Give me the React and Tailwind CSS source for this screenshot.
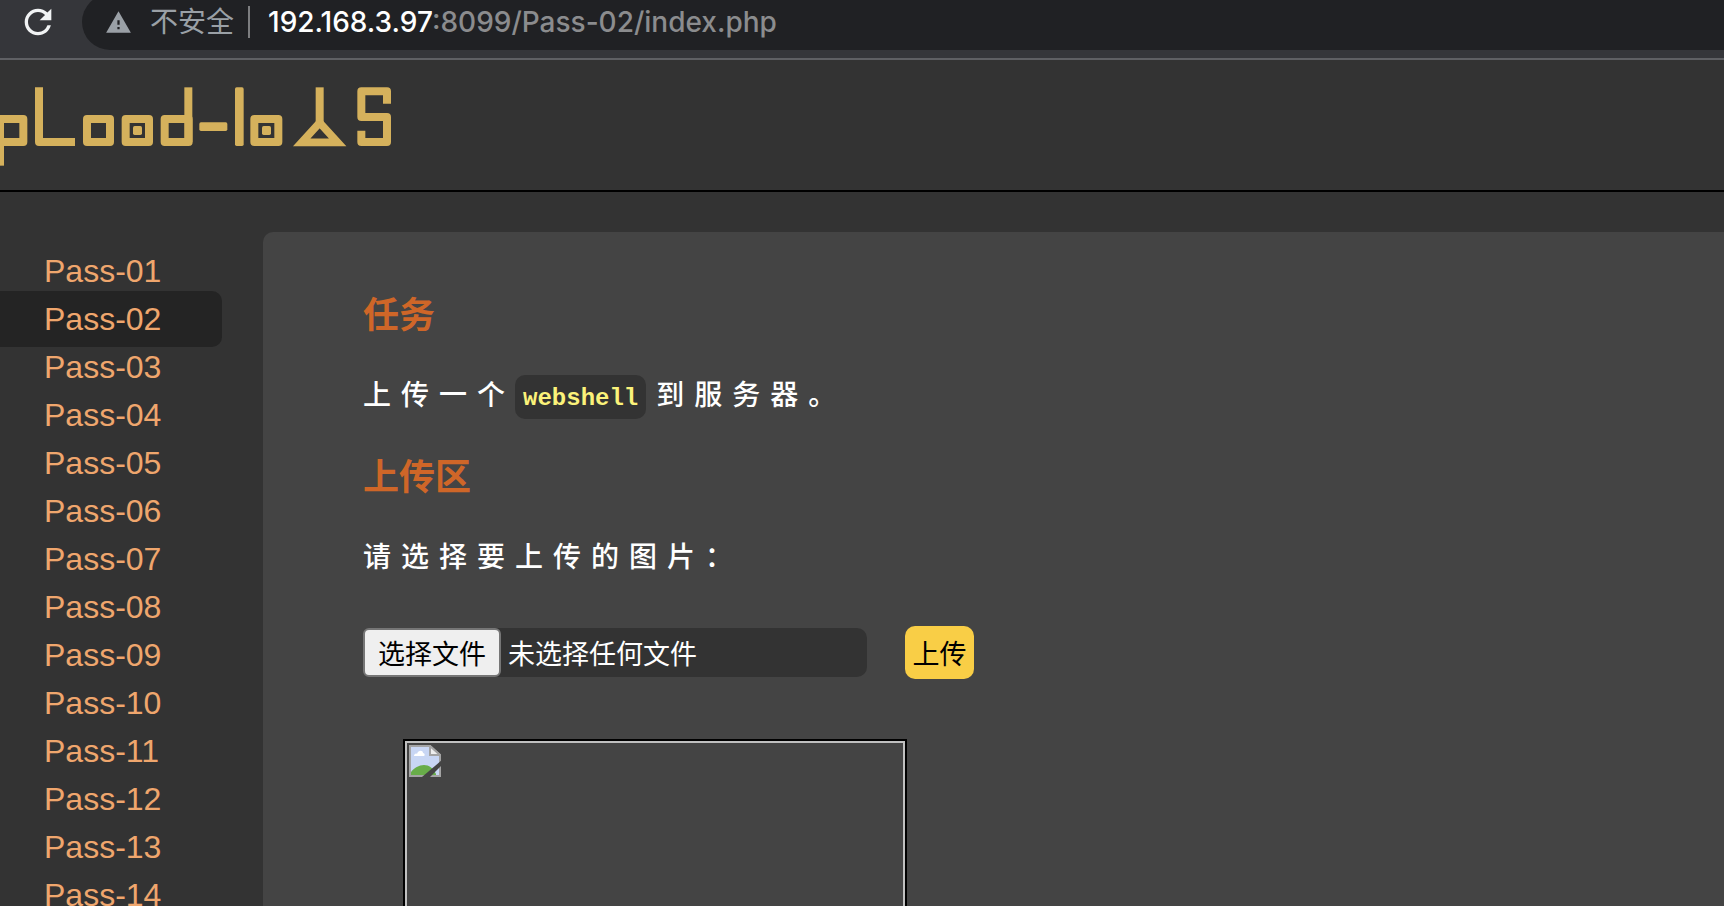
import React from "react";
import { MdRefresh, MdWarning } from "react-icons/md";

const passes = [
    "Pass-01", "Pass-02", "Pass-03", "Pass-04", "Pass-05", "Pass-06", "Pass-07",
    "Pass-08", "Pass-09", "Pass-10", "Pass-11", "Pass-12", "Pass-13", "Pass-14",
];

function AddressBar() {
    return (
        <div className="flex shrink-0 h-[60px] overflow-hidden bg-[#35363a] border-b-2 border-[#5f6064]">
            <button aria-label="重新加载" className="flex items-start pt-[2px] pl-[18px] w-[82px] shrink-0 text-[#f1f3f4]">
                <MdRefresh size={40} />
            </button>
            <div className="flex flex-1 items-center -mt-[6px] h-14 pl-[23px] rounded-l-full bg-[#202124] text-[28px] leading-8 whitespace-nowrap font-['Inter','Noto_Sans_CJK_SC',sans-serif]">
                <MdWarning size={27} className="text-[#9aa0a6]" />
                <span className="ml-[18px] text-[#9aa0a6]">不安全</span>
                <span className="ml-[14px] mr-[18px] w-[2px] h-8 bg-[#7d7e80]" />
                <span className="font-medium text-[#8b8c8e]">
                    <span className="text-white">192.168.3.97</span>:8099/Pass-02/index.php
                </span>
            </div>
        </div>
    );
}

function Logo() {
    return (
        <svg viewBox="0 0 1260 360" width="420" height="120" fill="none" stroke="#d5b15c" strokeWidth="24" strokeLinejoin="round" role="img" aria-label="upload-labs">
            <rect x="0" y="147" width="70" height="69" />
            <line x1="0" y1="147" x2="0" y2="287" />
            <polyline points="117,52 117,216 225,216" />
            <rect x="261" y="147" width="69" height="69" />
            <rect x="377" y="147" width="70" height="69" />
            <rect x="399" y="168" width="27" height="27" rx="5" fill="#d5b15c" stroke="none" />
            <rect x="494" y="147" width="72" height="69" />
            <line x1="565" y1="52" x2="565" y2="216" />
            <rect x="598" y="157" width="84" height="26" rx="5" fill="#d5b15c" stroke="none" />
            <rect x="705" y="52" width="26" height="176" rx="5" fill="#d5b15c" stroke="none" />
            <rect x="763" y="147" width="72" height="69" />
            <rect x="786" y="168" width="27" height="27" rx="5" fill="#d5b15c" stroke="none" />
            {/* triangle on a pole */}
            <line x1="959" y1="52" x2="959" y2="160" />
            <polygon points="905,217 1013,217 959,158" strokeWidth="23" strokeLinejoin="miter" />
            <polyline points="1161,101 1161,64 1084,64 1084,141 1161,141 1161,216 1084,216 1084,182" />
        </svg>
    );
}

function BrokenImage() {
    return (
        <svg viewBox="0 0 32 32" width="32" height="32" aria-hidden="true">
            <path d="M1 1h20l10 9v21H1z" fill="#c8d6f4" stroke="#a3a3a3" strokeWidth="2" />
            <path d="M5 11c0-2 2-3 3-2 1-4 6-4 6-1 2 0 2 3 1 3z" fill="#fff" />
            <path d="M2 30v-3c3-4 8-7 13-7 5 0 9 3 12 9v1z" fill="#68ad49" />
            <path d="M21 1v9h10z" fill="#eee" stroke="#a3a3a3" strokeWidth="2" />
            <path d="M33 15v5L21 32h-8z" fill="#444" />
        </svg>
    );
}

function App() {
    return (
        <div className="flex flex-col h-screen overflow-hidden bg-[#333] font-['Liberation_Sans','Noto_Sans_CJK_SC',sans-serif]">
            <AddressBar />

            {/* Header */}
            <header className="shrink-0 pt-[10px] border-b-2 border-black">
                <Logo />
            </header>

            <div className="flex flex-1 min-h-0">
                {/* Pass list */}
                <nav className="w-[263px] shrink-0 pt-[55px]">
                    <ul>
                        {passes.map((pass) => (
                            <li key={pass} className="text-[32px] leading-[48px]">
                                <a
                                    href={`#${pass}`}
                                    className={pass === "Pass-02" ? "py-[10px] pl-11 pr-[61px] rounded-r-[10px] bg-[#242424] text-[#efa66d]" : "pl-11 text-[#efa66d]"}
                                >
                                    {pass}
                                </a>
                            </li>
                        ))}
                    </ul>
                </nav>

                {/* Content */}
                <main className="flex-1 min-w-0 mt-10 pt-[55px] pl-[100px] rounded-tl-[10px] bg-[#444] text-white font-['Noto_Sans_CJK_SC',sans-serif]">
                    <h3 className="mb-8 text-[36px] leading-[50px] font-bold text-[#cf6628]">任务</h3>
                    <p className="mb-8 text-[28px] leading-[48px] font-medium tracking-[10px]">
                        上传一个
                        <code className="mr-[10px] px-2 pt-[10px] pb-[7px] rounded-[10px] bg-[#333] text-2xl leading-none font-bold tracking-normal text-[#fbf27a] font-['Liberation_Mono',monospace]">webshell</code>
                        到服务器。
                    </p>
                    <h3 className="mb-8 text-[36px] leading-[50px] font-bold text-[#cf6628]">上传区</h3>
                    <p className="mb-[47px] text-[28px] leading-[48px] font-medium tracking-[10px]">请选择要上传的图片：</p>

                    <form className="flex items-center text-[27px] leading-[45px]" onSubmit={(e) => e.preventDefault()}>
                        <input id="upload_file" type="file" className="sr-only" />
                        <label htmlFor="upload_file" className="flex w-[504px] rounded-[10px] bg-[#333]">
                            <span className="px-[13px] border-2 border-[#767676] rounded-md bg-[#efefef] text-black">选择文件</span>
                            <span className="ml-[7px] py-[2px]">未选择任何文件</span>
                        </label>
                        <button type="submit" className="ml-[38px] w-[69px] h-[53px] rounded-[10px] bg-[#f9ce46] text-black">上传</button>
                    </form>

                    <div className="mt-[60px] ml-10 w-[504px] h-[504px] border-2 border-black">
                        <div className="h-full p-[2px] border-2 border-[#c0c0c0]">
                            <BrokenImage />
                        </div>
                    </div>
                </main>
            </div>
        </div>
    );
}

export default App;
